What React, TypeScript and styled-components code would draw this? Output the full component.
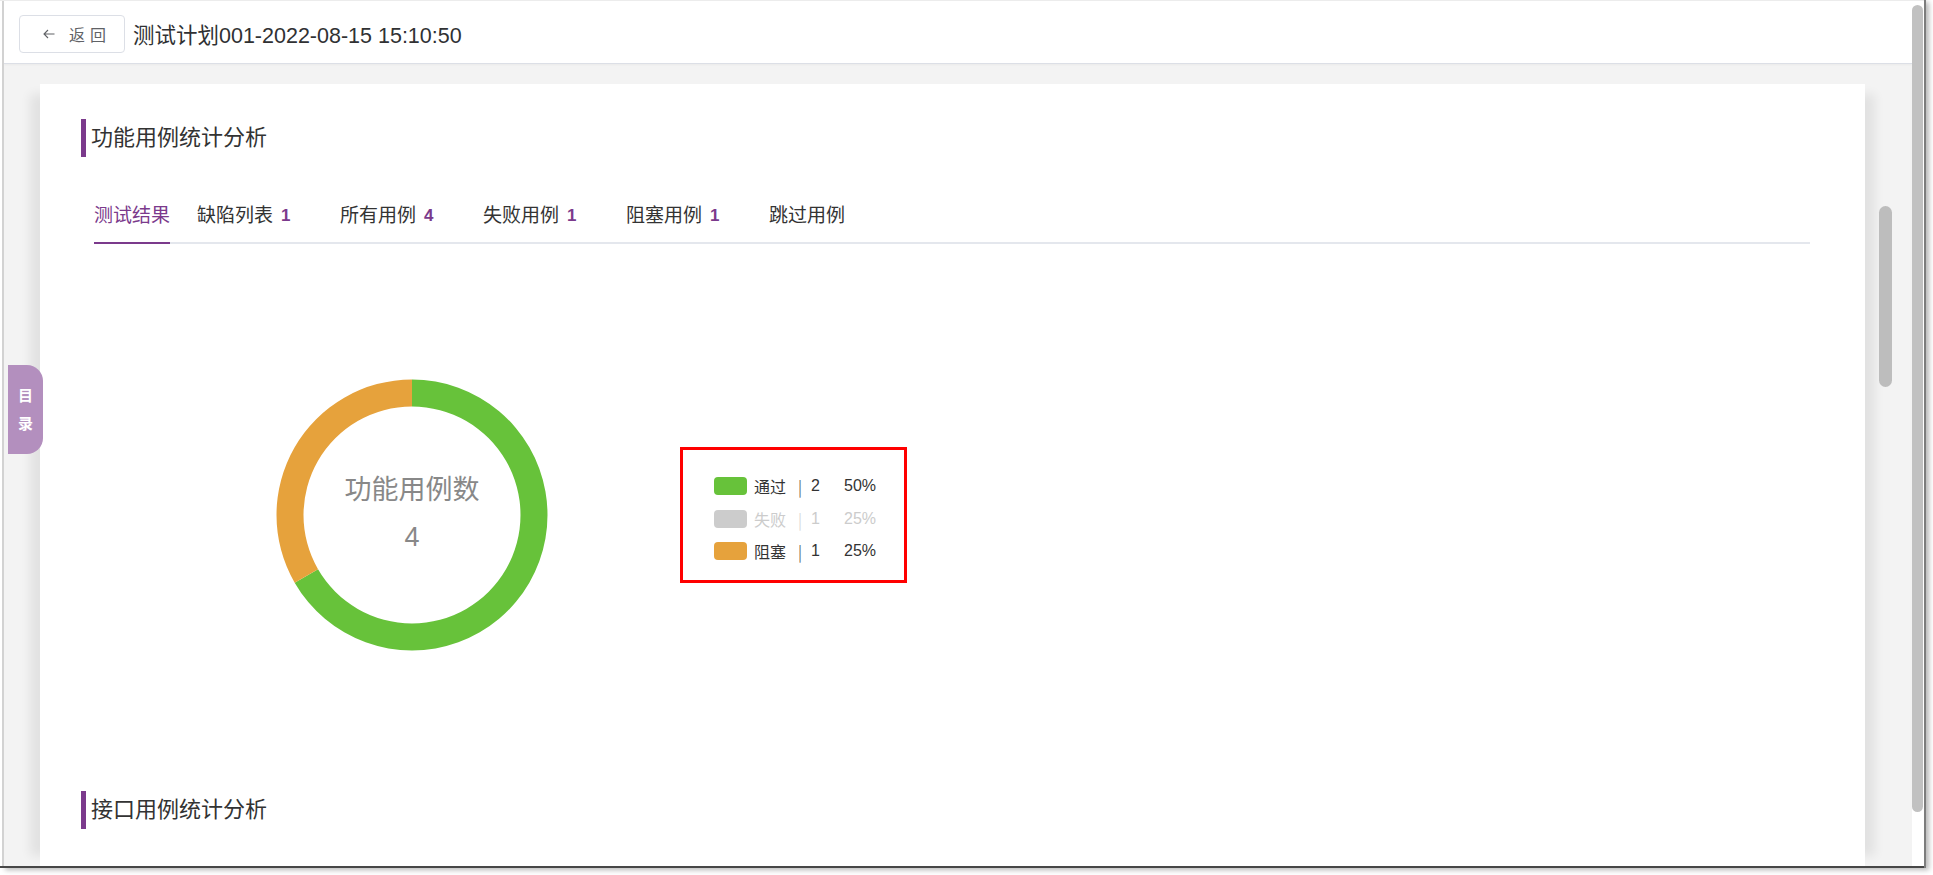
import React from 'react';
import styled, { createGlobalStyle } from 'styled-components';

const PURPLE = '#7b3a8c';
const GREEN = '#67c23a';
const ORANGE = '#e6a23c';
const DISABLED = '#cccccc';
const FONT = `"Liberation Sans", "Noto Sans CJK SC", sans-serif`;

const Global = createGlobalStyle`
  html, body { margin: 0; padding: 0; background: #fff; overflow: hidden; }
  body { font-family: ${FONT}; }
  * { box-sizing: border-box; }
`;

const Screen = styled.div`
  width: 1933px;
  height: 875px;
  background: #fff;
  overflow: hidden;
`;

const Frame = styled.div`
  position: relative;
  width: 1924px;
  height: 868px;
  display: flex;
  padding-left: 2px;
  border-top: 1px solid #ececec;
  border-bottom: 2px solid #474747;
  box-shadow: 2px 0 0 #7d7d7d, 5px 2px 5px rgba(0, 0, 0, 0.28);
  background: #fff;
`;

const Window = styled.div`
  flex: 1;
  min-width: 0;
  display: flex;
  flex-direction: column;
  border-left: 2px solid #d2d2d2;
  overflow: hidden;
`;

const Header = styled.header`
  height: 63px;
  flex-shrink: 0;
  display: flex;
  align-items: center;
  padding: 3px 0 0 15px;
  background: #fff;
  border-bottom: 1px solid #dcdfe6;
  box-shadow: 0 1px 2px rgba(0, 0, 0, 0.04);
  position: relative;
  z-index: 1;
`;

const BackButton = styled.button`
  width: 106px;
  height: 38px;
  display: flex;
  align-items: center;
  padding: 0 0 0 23px;
  border: 1px solid #dcdfe6;
  border-radius: 4px;
  background: #fff;
  color: #606266;
  font-family: ${FONT};
  font-size: 16px;
  letter-spacing: 5px;
  cursor: pointer;
  svg { margin-right: 14px; flex-shrink: 0; }
`;

const Title = styled.h1`
  margin: 0 0 0 8px;
  font-size: 21.5px;
  font-weight: 400;
  color: #303133;
`;

const Body = styled.div`
  flex: 1;
  min-height: 0;
  display: flex;
  background: #f3f3f3;
  padding: 20px 0 0 36px;
  overflow: hidden;
`;

const Card = styled.main`
  width: 1825px;
  flex-shrink: 0;
  background: #fff;
  padding: 0 55px 0 41px;
  box-shadow: -20px 0 10px -10px rgba(0, 0, 0, 0.07), 20px 0 10px -10px rgba(0, 0, 0, 0.07);
`;

const Gutter = styled.div`
  flex: 1;
  padding: 122px 0 0 14px;
`;

const InnerThumb = styled.div`
  width: 13px;
  height: 181px;
  border-radius: 7px;
  background: #bdbdbd;
`;

const OuterTrack = styled.div`
  width: 12px;
  flex-shrink: 0;
  padding-top: 4px;
  background: #fff;
`;

const OuterThumb = styled.div`
  width: 11px;
  height: 807px;
  border-radius: 6px;
  background: #c1c1c1;
`;

const SectionTitle = styled.h2<{ $top: number }>`
  margin: ${p => p.$top}px 0 0;
  height: 38px;
  line-height: 38px;
  border-left: 5px solid ${PURPLE};
  padding-left: 5px;
  font-size: 22px;
  font-weight: 400;
  color: #333;
`;

const TabNav = styled.nav`
  margin: 42px 0 0 13px;
  display: flex;
  gap: 27px;
  border-bottom: 2px solid #e4e7ed;
`;

const Tab = styled.div<{ $active?: boolean }>`
  display: flex;
  align-items: center;
  padding: 5px 0 14px;
  line-height: 24px;
  font-size: 19px;
  color: ${p => (p.$active ? PURPLE : '#333')};
  margin-bottom: -2px;
  border-bottom: 2px solid ${p => (p.$active ? PURPLE : 'transparent')};
  cursor: pointer;
`;

const TabCount = styled.span`
  display: inline-block;
  width: 32px;
  margin-left: 8px;
  font-size: 17px;
  font-weight: 700;
  color: ${PURPLE};
`;

const ChartRow = styled.section`
  display: flex;
  align-items: center;
  padding: 135px 0 140px 195px;
`;

const Legend = styled.div`
  margin-left: 132px;
  width: 227px;
  height: 136px;
  border: 3px solid #ff0000;
  padding: 20px 0 0 31px;
  display: grid;
  grid-template-columns: 40px 44px 13px 33px auto;
  grid-auto-rows: 32.5px;
  align-items: center;
  font-size: 16px;
`;

const Swatch = styled.span<{ $color: string }>`
  width: 33px;
  height: 18px;
  border-radius: 4px;
  background: ${p => p.$color};
`;

const LegendText = styled.span<{ $off?: boolean }>`
  color: ${p => (p.$off ? DISABLED : '#333')};
  white-space: nowrap;
`;

const Separator = styled(LegendText)`
  font-family: "Noto Sans CJK SC", sans-serif;
  font-weight: 300;
`;

const TocTab = styled.div`
  position: absolute;
  left: 8px;
  top: 364px;
  width: 35px;
  height: 89px;
  border-radius: 0 16px 16px 0;
  background: #b38fbe;
  color: #fff;
  font-size: 15px;
  font-weight: 700;
  line-height: 28px;
  display: flex;
  flex-direction: column;
  align-items: center;
  justify-content: center;
  z-index: 5;
`;

const tabs = [
  { label: '测试结果', active: true },
  { label: '缺陷列表', count: 1 },
  { label: '所有用例', count: 4 },
  { label: '失败用例', count: 1 },
  { label: '阻塞用例', count: 1 },
  { label: '跳过用例' },
];

const legend = [
  { name: '通过', count: 2, pct: '50%', color: GREEN, off: false },
  { name: '失败', count: 1, pct: '25%', color: DISABLED, off: true },
  { name: '阻塞', count: 1, pct: '25%', color: ORANGE, off: false },
];

function pt(cx: number, cy: number, r: number, a: number) {
  const rad = (a * Math.PI) / 180;
  return `${(cx + r * Math.sin(rad)).toFixed(3)} ${(cy - r * Math.cos(rad)).toFixed(3)}`;
}

function arc(cx: number, cy: number, r0: number, r1: number, a0: number, a1: number) {
  const large = a1 - a0 > 180 ? 1 : 0;
  return `M ${pt(cx, cy, r1, a0)} A ${r1} ${r1} 0 ${large} 1 ${pt(cx, cy, r1, a1)} L ${pt(cx, cy, r0, a1)} A ${r0} ${r0} 0 ${large} 0 ${pt(cx, cy, r0, a0)} Z`;
}

function Donut() {
  const c = 136;
  const ro = 135.5;
  const ri = 108.5;
  return (
    <svg width="272" height="272" viewBox="0 0 272 272">
      <path d={arc(c, c, ri, ro, 0, 240)} fill={GREEN} />
      <path d={arc(c, c, ri, ro, 240, 360)} fill={ORANGE} />
      <text x={c} y={110.5} textAnchor="middle" dominantBaseline="central" fontSize="27" fill="#888" fontFamily={FONT}>
        功能用例数
      </text>
      <text x={c} y={158} textAnchor="middle" dominantBaseline="central" fontSize="27" fill="#888" fontFamily={FONT}>
        4
      </text>
    </svg>
  );
}

function BackArrow() {
  return (
    <svg width="12" height="10" viewBox="0 0 12 10" fill="none" stroke="#606266" strokeWidth="1.1">
      <path d="M11.5 5 H1 M5 1 L1 5 L5 9" />
    </svg>
  );
}

export default function App() {
  return (
    <Screen>
      <Global />
      <Frame>
        <Window>
          <Header>
            <BackButton>
              <BackArrow />
              返回
            </BackButton>
            <Title>测试计划001-2022-08-15 15:10:50</Title>
          </Header>
          <Body>
            <Card>
              <SectionTitle $top={35}>功能用例统计分析</SectionTitle>
              <TabNav>
                {tabs.map(t => (
                  <Tab key={t.label} $active={t.active}>
                    {t.label}
                    {t.count !== undefined && <TabCount>{t.count}</TabCount>}
                  </Tab>
                ))}
              </TabNav>
              <ChartRow>
                <Donut />
                <Legend>
                  {legend.map(l => (
                    <React.Fragment key={l.name}>
                      <Swatch $color={l.color} />
                      <LegendText $off={l.off}>{l.name}</LegendText>
                      <Separator $off={l.off}>|</Separator>
                      <LegendText $off={l.off}>{l.count}</LegendText>
                      <LegendText $off={l.off}>{l.pct}</LegendText>
                    </React.Fragment>
                  ))}
                </Legend>
              </ChartRow>
              <SectionTitle $top={0}>接口用例统计分析</SectionTitle>
            </Card>
            <Gutter>
              <InnerThumb />
            </Gutter>
          </Body>
        </Window>
        <OuterTrack>
          <OuterThumb />
        </OuterTrack>
        <TocTab>
          <span>目</span>
          <span>录</span>
        </TocTab>
      </Frame>
    </Screen>
  );
}
